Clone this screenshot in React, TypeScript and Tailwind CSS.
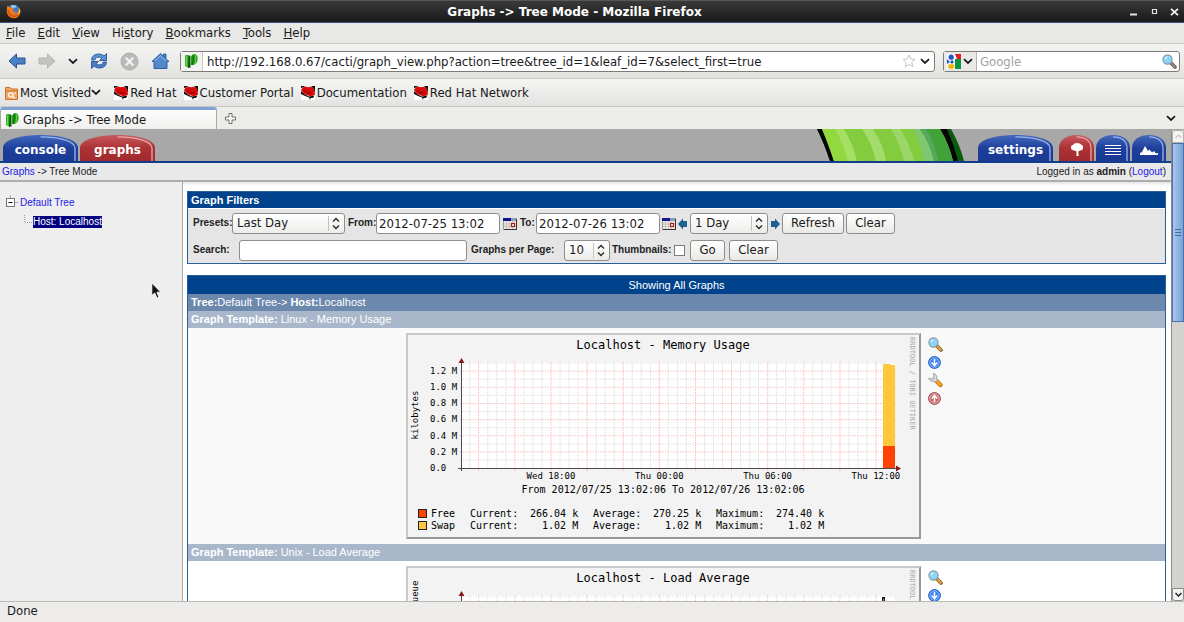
import { useState } from "react";
import type { ReactNode } from "react";

interface LegendRow {
  color: string;
  name: string;
  values: string[];
}

interface Graph {
  id: string;
  template: string;
  title: string;
  axisLabel: string;
  axisLabelY: number;
  ticks: string[];
  timeLabels: string[];
  range: string;
  legend: LegendRow[];
}

const GRAPHS: Graph[] = [
  {
    id: "memory",
    template: "Linux - Memory Usage",
    title: "Localhost - Memory Usage",
    axisLabel: "kilobytes",
    axisLabelY: 82,
    ticks: ["0.0  ", "0.2 M", "0.4 M", "0.6 M", "0.8 M", "1.0 M", "1.2 M"],
    timeLabels: ["Wed 18:00", "Thu 00:00", "Thu 06:00", "Thu 12:00"],
    range: "From 2012/07/25 13:02:06 To 2012/07/26 13:02:06",
    legend: [
      { color: "#ff4105", name: "Free", values: ["266.04 k", "270.25 k", "274.40 k"] },
      { color: "#ffc73b", name: "Swap", values: ["  1.02 M", "  1.02 M", "  1.02 M"] },
    ],
  },
  {
    id: "load",
    template: "Unix - Load Average",
    title: "Localhost - Load Average",
    axisLabel: "processes in the run queue",
    axisLabelY: 85,
    ticks: [],
    timeLabels: [],
    range: "",
    legend: [],
  },
];

const MENUS = ["File", "Edit", "View", "History", "Bookmarks", "Tools", "Help"];
const MENU_KEYS = [0, 0, 0, 2, 0, 0, 0];
const BOOKMARKS = ["Red Hat", "Customer Portal", "Documentation", "Red Hat Network"];
const MONO = "'DejaVu Sans Mono', monospace";

function Chevron() {
  return (
    <svg width="10" height="7" viewBox="0 0 10 7" fill="none" stroke="#1c1c1c" strokeWidth="1.8" aria-hidden="true">
      <path d="M1 1.2 L5 5 L9 1.2" />
    </svg>
  );
}

function CactiIcon() {
  return (
    <svg width="13" height="14" viewBox="0 0 13 14" aria-hidden="true">
      <path d="M0 2 Q0 1 1 1 L3 1 L4 3 L4 14 L0 12Z" fill="#36b324" />
      <path d="M3.5 1 L5.5 2 L5.5 13.5 L3 14Z" fill="#0c5a0b" />
      <path d="M6 3 Q7 0 10 0 Q13 1 12.5 6 Q12 10 8.5 11 L6 11Z" fill="#23a216" />
      <path d="M8 1 Q9 5 7 11" stroke="#0d6e0c" strokeWidth="1.3" fill="none" />
      <path d="M1.5 2 V12 M10.5 1 Q11 6 10 10" stroke="#7ee25c" strokeWidth=".8" fill="none" />
    </svg>
  );
}

function FirefoxIcon() {
  return (
    <svg width="15" height="15" viewBox="0 0 15 15" aria-hidden="true">
      <circle cx="7.8" cy="6.8" r="6" fill="#3a79c4" />
      <path d="M4 2 Q7 0 11 2 Q9 5 6 4Z" fill="#8cc4ee" />
      <path d="M1.5 1.5 L4 3.6 Q6 3 6.5 4.2 L8.4 5 Q6.8 6 6.6 7 Q8.5 8.8 11 7.3 Q10.5 9.8 7.6 9.9 Q11 11 12.6 7 Q12.8 4.5 11.8 3 Q14.5 4.5 14.4 8.2 Q13.2 14.2 7.5 14.2 Q1.2 13.6 .8 7.5 Q.6 4 1.5 1.5Z" fill="#f07a1a" />
      <path d="M1.6 6 Q2 12 8 13.2 Q12.5 12.8 13.8 8.5 Q11.5 12 7.5 11.6 Q3 10.5 3 6Z" fill="#d9480c" />
      <path d="M13.6 5 Q14.3 8 12.6 10" stroke="#ffd34d" fill="none" />
    </svg>
  );
}

function RedHatIcon() {
  return (
    <svg width="14" height="14" viewBox="0 0 14 14" aria-hidden="true">
      <rect width="14" height="14" fill="#fff" />
      <path d="M0 0 H4 L2 1.5 L0 2Z M10 0 H14 V7 L12.5 3Z" fill="#111" />
      <path d="M0 5 L4 8.5 L8 10.5 L13.5 9.5 L12 12 L9.5 12 L9 14 L8 11.5 L4 10 L0 8Z" fill="#111" />
      <path d="M0 4 Q1 1 4 .5 L7 1.2 Q9 0 12 2 Q14 5 14 8.6 Q11 11 7 9.6 Q3 8.6 0 4Z" fill="#d80a0a" />
      <path d="M3 4.5 Q6 7.5 11 7.2" stroke="#8b0000" fill="none" />
    </svg>
  );
}

function MagnifierIcon({ handle }: { handle: string }) {
  return (
    <svg width="15" height="15" viewBox="0 0 15 15" aria-hidden="true">
      <path d="M8.5 8.5 L13 13" stroke="#6d5a3c" strokeWidth="3.6" strokeLinecap="round" />
      <path d="M9.3 9.3 L12.8 12.8" stroke={handle} strokeWidth="2.2" strokeLinecap="round" />
      <circle cx="5.5" cy="5.5" r="4.6" fill="#8fd3f2" stroke="#7f97a8" strokeWidth="1.1" />
      <path d="M2.5 5.5 Q3 2.5 6 2.4 Q5 4.5 2.5 5.5Z" fill="#eafaff" />
    </svg>
  );
}

function ArrowDisc({ up }: { up?: boolean }) {
  return (
    <svg width="13" height="13" viewBox="0 0 13 13" aria-hidden="true">
      <circle cx="6.5" cy="6.5" r="5.9" fill={up ? "#c9666a" : "#3d83ee"} stroke={up ? "#9c4a4f" : "#2455bd"} />
      <circle cx="6.5" cy="6.5" r="4.7" fill="none" stroke={up ? "#f0c8c8" : "#9cc6ff"} strokeWidth=".8" />
      <path
        d={up ? "M6.5 10 V3.6 M3.7 6.4 L6.5 3.4 L9.3 6.4" : "M6.5 3 V9.4 M3.7 6.6 L6.5 9.6 L9.3 6.6"}
        stroke="#fff"
        strokeWidth="1.5"
        fill="none"
      />
    </svg>
  );
}

function WrenchIcon() {
  return (
    <svg width="15" height="15" viewBox="0 0 15 15" aria-hidden="true">
      <path d="M8 7.5 L12.5 12" stroke="#b86a0a" strokeWidth="4.2" strokeLinecap="round" />
      <path d="M8.5 8 L12.3 11.8" stroke="#f9a31c" strokeWidth="2.8" strokeLinecap="round" />
      <path d="M5.4 .6 Q9.5 1.5 8.6 5.8 L9.6 7 L7.2 9.3 L5.8 8.2 Q2 9 .7 5.2 L3.2 6 L5.4 5.6 L5.8 3.2Z" fill="#d7dade" stroke="#8d9298" strokeWidth=".8" />
    </svg>
  );
}

function CalendarIcon() {
  return (
    <svg width="14" height="12" viewBox="0 0 14 12" className="shrink-0" aria-hidden="true">
      <rect x=".5" y=".5" width="13" height="11" fill="#e9e9e4" stroke="#9b9b96" />
      <rect width="8" height="3" fill="#14148c" />
      <rect x="8" width="5" height="3" fill="#8f9bbf" />
      <path d="M1 6 H13 M1 8.5 H13 M3.5 3 V11 M6.5 3 V11 M9.5 3 V11" stroke="#bcbcb8" strokeWidth=".8" />
      <rect x="8.5" y="5.5" width="3" height="3" fill="#fff" stroke="#b3161b" strokeWidth="1.2" />
      <path d="M13.5 1 V11.5 H1" stroke="#3a3030" fill="none" />
    </svg>
  );
}

function ShiftArrow({ left }: { left?: boolean }) {
  return (
    <svg width="10" height="12" viewBox="0 0 10 12" className="block" aria-hidden="true">
      <path d={left ? "M0 6 L5 .5 V3 H9 V9 H5 V11.5Z" : "M10 6 L5 .5 V3 H1 V9 H5 V11.5Z"} fill="#1d6094" />
    </svg>
  );
}

function NavArrow({ forward }: { forward?: boolean }) {
  return (
    <svg width="18" height="18" viewBox="0 0 18 18" aria-hidden="true">
      <path
        d={forward ? "M17 9 L9.5 2 V6 H1 V12 H9.5 V16Z" : "M1 9 L8.5 2 V6 H17 V12 H8.5 V16Z"}
        fill={forward ? "#c3c3c1" : "#4a7fc3"}
        stroke={forward ? "#b4b4b2" : "#24569b"}
        strokeLinejoin="round"
      />
    </svg>
  );
}

function TitleBar() {
  return (
    <header className="flex h-[23px] shrink-0 items-center border-t border-b border-t-[#585858] border-b-[#3b5580] bg-linear-to-b from-[#3a3a3a] to-[#191919] pl-1.5">
      <FirefoxIcon />
      <h1 className="flex-1 text-center font-['DejaVu_Sans',sans-serif] text-[12px] leading-4 font-bold text-white">
        Graphs -&gt; Tree Mode - Mozilla Firefox
      </h1>
      <div className="flex items-center gap-2 pr-1">
        <button type="button" aria-label="Minimize" className="flex h-4 w-3 items-center justify-center">
          <svg width="8" height="9" stroke="#e4e4e4" strokeWidth="2" aria-hidden="true"><path d="M0 7.5 H7" /></svg>
        </button>
        <button type="button" aria-label="Maximize" className="flex h-4 w-3 items-center justify-center">
          <svg width="7" height="7" fill="none" stroke="#e4e4e4" aria-hidden="true"><path d="M1.5 1 V5.5 H5.5 V1 M1 1.5 H6" strokeWidth="1.2" /></svg>
        </button>
        <button type="button" aria-label="Close" className="flex h-4 w-3 items-center justify-center">
          <svg width="9" height="8" stroke="#f0f0f0" strokeWidth="1.8" aria-hidden="true"><path d="M1 .8 L8 7.2 M8 .8 L1 7.2" /></svg>
        </button>
      </div>
    </header>
  );
}

function MenuBar() {
  return (
    <nav className="flex h-[21px] shrink-0 items-center gap-3 border-b border-[#c4c4c1] bg-[#e8e8e6] pl-1.5">
      {MENUS.map((name, i) => (
        <button key={name} type="button">
          {name.slice(0, MENU_KEYS[i])}
          <span className="underline">{name[MENU_KEYS[i]]}</span>
          {name.slice(MENU_KEYS[i] + 1)}
        </button>
      ))}
    </nav>
  );
}

function NavToolbar() {
  return (
    <div className="flex h-[35px] shrink-0 items-center border-b border-[#cbcbc8] bg-linear-to-b from-[#f4f4f3] to-[#e2e2e0] pr-1 pl-2">
      <button type="button" aria-label="Back"><NavArrow /></button>
      <button type="button" aria-label="Forward" className="ml-3"><NavArrow forward /></button>
      <button type="button" aria-label="History" className="ml-3"><Chevron /></button>
      <button type="button" aria-label="Reload" className="ml-3">
        <svg width="18" height="18" viewBox="0 0 18 18" aria-hidden="true">
          <path d="M1.5 8 Q2 2 9 2 Q12 2 14 4 L16.5 1.5 V8.5 H9.5 L12 6.2 Q9 4.2 6.5 5.5 Q5 6.5 4.8 8Z" fill="#5c91d2" stroke="#24569b" strokeWidth=".9" />
          <path d="M16.5 10 Q16 16 9 16 Q6 16 4 14 L1.5 16.5 V9.5 H8.5 L6 11.8 Q9 13.8 11.5 12.5 Q13 11.5 13.2 10Z" fill="#4a7fc3" stroke="#24569b" strokeWidth=".9" />
        </svg>
      </button>
      <button type="button" aria-label="Stop" className="ml-3">
        <svg width="19" height="19" viewBox="0 0 19 19" aria-hidden="true">
          <circle cx="9.5" cy="9.5" r="8.5" fill="#bdb9b8" stroke="#aeaaa9" />
          <path d="M6.3 6.3 L12.7 12.7 M12.7 6.3 L6.3 12.7" stroke="#f5f5f5" strokeWidth="2.2" strokeLinecap="round" />
        </svg>
      </button>
      <button type="button" aria-label="Home" className="ml-3">
        <svg width="19" height="18" viewBox="0 0 19 18" aria-hidden="true">
          <path d="M12.5 2 H15 V6 H12.5Z" fill="#4a7fc3" stroke="#24569b" strokeWidth=".8" />
          <path d="M1 9.5 L9.5 1.5 L18 9.5 H16 V16.5 H3 V9.5Z" fill="#5389cb" stroke="#24569b" strokeWidth=".9" strokeLinejoin="round" />
          <path d="M4 9 L9.5 3.6 L15 9" stroke="#92b8e6" fill="none" />
        </svg>
      </button>
      <div className="ml-2.5 flex h-[21px] min-w-0 flex-1 items-center rounded-[3px] border border-[#7c7b76] bg-white pr-1">
        <span className="flex h-full w-[22px] shrink-0 items-center justify-center border-r border-[#c9c9c6] bg-[#f3f3f2]">
          <CactiIcon />
        </span>
        <input
          aria-label="Location"
          defaultValue="http://192.168.0.67/cacti/graph_view.php?action=tree&tree_id=1&leaf_id=7&select_first=true"
          className="h-full min-w-0 flex-1 bg-transparent pl-1 outline-none"
        />
        <svg width="14" height="14" viewBox="0 0 14 14" fill="#fff" stroke="#c6c6c4" strokeLinejoin="round" aria-hidden="true">
          <path d="M7 1 L8.7 5 L13 5.3 L9.8 8.2 L10.8 12.8 L7 10.4 L3.2 12.8 L4.2 8.2 L1 5.3 L5.3 5Z" />
        </svg>
        <button type="button" aria-label="Show history" className="ml-1"><Chevron /></button>
      </div>
      <div className="ml-2 flex h-[21px] w-[237px] items-center rounded-[3px] border border-[#7c7b76] bg-white pr-0.5">
        <button type="button" aria-label="Search engine" className="flex h-full shrink-0 items-center gap-0.5 border-r border-[#b4b4b0] bg-[#e9e9e7] px-[3px]">
          <svg width="14" height="15" viewBox="0 0 14 15" aria-hidden="true">
            <rect width="14" height="15" fill="#fff" />
            <path d="M8 0 H14 V5 H10Z" fill="#de1f26" />
            <path d="M8 5 H14 V15 H8Z" fill="#0c9440" />
            <circle cx="4.2" cy="3.2" r="2.6" fill="#1f55c4" />
            <path d="M0 5 L3 8 L0 10Z" fill="#1f55c4" />
            <path d="M5 6 L7 8 L5 10 L3 8Z" fill="#1f55c4" />
            <ellipse cx="4.2" cy="12.4" rx="3.2" ry="2.3" fill="#f4b40e" />
          </svg>
          <Chevron />
        </button>
        <input aria-label="Search" placeholder="Google" className="h-full min-w-0 flex-1 pl-[3px] outline-none placeholder:text-[#a3a3a1]" />
        <button type="button" aria-label="Search the web"><MagnifierIcon handle="#8b8b8b" /></button>
      </div>
    </div>
  );
}

function BookmarksBar() {
  return (
    <div className="flex h-7 shrink-0 items-center gap-[7px] border-b border-[#c6c6c3] bg-linear-to-b from-[#f5f5f3] to-[#e3e3e1] pl-[5px]">
      <button type="button" className="mr-1.5 flex items-center">
        <svg width="13" height="14" viewBox="0 0 13 14" className="mr-0.5" aria-hidden="true">
          <path d="M.5 1.5 H5 L6.5 3 H12.5 V13.5 H.5Z" fill="#f3a765" stroke="#c8722a" />
          <path d="M1 5 H12" stroke="#c8722a" />
          <circle cx="5.8" cy="8.8" r="2.2" fill="none" stroke="#fff" strokeWidth="1.2" />
          <path d="M7.5 10.5 L9.8 12.5 M9 7 H11" stroke="#fff" strokeWidth="1.2" />
        </svg>
        Most Visited
        <Chevron />
      </button>
      {BOOKMARKS.map((name) => (
        <a key={name} href="#" className="flex items-center gap-0.5">
          <RedHatIcon />
          {name}
        </a>
      ))}
    </div>
  );
}

function TabStrip() {
  return (
    <div className="flex h-[23px] shrink-0 items-end border-b border-[#a8a8a5] bg-[#ececea] pr-2">
      <button type="button" className="flex h-[22px] w-[217px] items-center gap-1 rounded-t-[3px] border border-t-[3px] border-b-0 border-[#a9a9a6] border-t-[#7fa2d6] bg-linear-to-b from-[#fdfdfd] to-[#efefed] pl-[5px]">
        <CactiIcon />
        Graphs -&gt; Tree Mode
      </button>
      <button type="button" aria-label="Open a new tab" className="ml-2 flex h-[22px] items-center">
        <svg width="11" height="11" viewBox="0 0 11 11" fill="#fff" stroke="#6e6e6b" aria-hidden="true">
          <path d="M4 .5 H7 V4 H10.5 V7 H7 V10.5 H4 V7 H.5 V4 H4Z" />
        </svg>
      </button>
      <button type="button" aria-label="List all tabs" className="ml-auto flex h-[22px] items-center"><Chevron /></button>
    </div>
  );
}

function ShellTab({ label, red, width, children }: { label?: string; red?: boolean; width: number; children?: ReactNode }) {
  const w = width;
  return (
    <a
      href="#"
      aria-label={label ?? "view"}
      className="relative flex h-[26px] items-center justify-center font-['DejaVu_Sans',sans-serif] text-[12px] leading-4 font-bold text-white"
      style={{ width: w }}
    >
      <svg width={w} height="26" viewBox={`0 0 ${w} 26`} className="absolute inset-0" aria-hidden="true">
        <defs>
          <linearGradient id={`tab${w}${red}`} x1="0" y1="0" x2="0" y2="1">
            <stop offset="0" stopColor={red ? "#c65a5e" : "#4468bd"} />
            <stop offset=".5" stopColor={red ? "#ad3236" : "#1e409b"} />
            <stop offset="1" stopColor={red ? "#a12a2e" : "#183a93"} />
          </linearGradient>
        </defs>
        <path
          d={`M0 26 V13 C0 4 ${w * 0.25} 0 ${w / 2} 0 C${w * 0.75} 0 ${w} 4 ${w} 13 V26Z`}
          fill={`url(#tab${w}${red})`}
        />
        <path
          d={`M${w / 2} 1.8 C${w * 0.75} 1.8 ${w - 3} 6 ${w - 3} 13 V26`}
          fill="none"
          stroke={red ? "#e7a9ab" : "#9db4e8"}
          strokeWidth="1.3"
        />
      </svg>
      <span className="relative pt-1">{label}{children}</span>
    </a>
  );
}

function CactiHeader() {
  return (
    <div className="flex h-[33px] shrink-0 items-end border-b-2 border-[#123c8c] bg-[#a8a8a8] pr-[5px] pl-[3px]">
      <div className="flex gap-0.5">
        <ShellTab label="console" width={75} />
        <ShellTab label="graphs" red width={75} />
      </div>
      <svg width="150" height="32" viewBox="0 0 150 32" className="ml-auto" aria-hidden="true">
        <path d="M1 0 H135 Q144 16 148 32 H14 Q8 14 1 0Z" fill="#0b5a0e" />
        <path d="M1 0 H131 Q138 16 142 32 H14 Q8 14 1 0Z" fill="#050505" />
        <path d="M6 0 H124 Q133 15 137 32 H18 Q12 14 6 0Z" fill="#83cc3e" />
        <path d="M6 0 H22 Q30 16 34 32 H18 Q12 14 6 0Z" fill="#92d83f" />
        <path d="M19 0 H28 Q37 15 41 32 H32 Q27 14 19 0Z" fill="#a5df63" />
        <path d="M46 0 H57 Q67 15 70 32 H60 Q56 14 46 0Z" fill="#a3dc6b" />
        <path d="M75 0 H84 Q94 15 98 32 H88 Q84 14 75 0Z" fill="#9bd768" />
        <path d="M97 0 H104 Q115 15 118 32 H108 Q105 14 97 0Z" fill="#7fc772" />
        <path d="M104 0 H124 Q133 15 137 32 H118 Q114 14 104 0Z" fill="#42a23a" />
        <path d="M104 0 H110 Q119 15 122 32 H118 Q114 14 104 0Z" fill="#55a95d" />
      </svg>
      <div className="ml-3 flex gap-0.5">
        <div className="mr-1"><ShellTab label="settings" width={75} /></div>
        <ShellTab red width={35}>
          <svg width="14" height="14" viewBox="0 0 14 14" className="block" fill="#fff" aria-hidden="true">
            <path d="M1 4 Q1 2 3 2 Q4 0 7 0 Q10 0 11 1.5 Q13.5 2 13 5 Q13 7.5 10 7.5 L8.3 8.5 L8.6 13 H6.4 L6.6 8.5 L4.5 7.6 Q.5 7 1 4Z" />
          </svg>
        </ShellTab>
        <ShellTab width={34}>
          <svg width="16" height="12" viewBox="0 0 16 12" className="block" stroke="#fff" strokeWidth="1.1" aria-hidden="true">
            <path d="M0 1.5 H16 M0 4.5 H16 M0 7.5 H16 M0 10.5 H16" />
          </svg>
        </ShellTab>
        <ShellTab width={34}>
          <svg width="18" height="9" viewBox="0 0 18 9" className="block" fill="#fff" aria-hidden="true">
            <path d="M0 9 V7 L2 6 L5 0 L8 5 L9.5 3.5 L12 6.5 L14 5 L16 7.5 L18 7 V9Z" />
          </svg>
        </ShellTab>
      </div>
    </div>
  );
}

function SideTree() {
  return (
    <aside className="w-[183px] shrink-0 border-r border-[#a6a6a6] bg-[#eeeeee] pt-[13px] pl-1.5 text-[10px] leading-3">
      <div className="flex items-center gap-0.5">
        <svg width="12" height="14" viewBox="0 0 12 14" className="mb-0.5" fill="none" stroke="#777" aria-hidden="true">
          <rect x=".5" y="3.5" width="8" height="8" fill="#fff" />
          <path d="M2.5 7.5 H6.5" stroke="#000" />
          <path d="M4.5 0 V3 M9 7.5 H12" stroke="#aaa" />
        </svg>
        <a href="#" className="text-[#2320e6]">Default Tree</a>
      </div>
      <div className="mt-1 flex items-center pl-[18px]">
        <svg width="9" height="10" className="mb-1" fill="none" stroke="#999" strokeDasharray="1 1" aria-hidden="true"><path d="M.5 0 V7.5 H9" /></svg>
        <a href="#" className="bg-[#000080] text-white">Host: Localhost</a>
      </div>
    </aside>
  );
}

const controlClass =
  "h-[21px] rounded-[3px] border border-[#8f8e8a] font-['DejaVu_Sans_Condensed','DejaVu_Sans',sans-serif] text-[13px] font-normal text-[#1a1a1a]";

function FilterSelect({ id, options, className }: { id: string; options: string[]; className: string }) {
  return (
    <span className={`relative inline-flex ${className}`}>
      <select id={id} aria-label={id} className={`${controlClass} w-full appearance-none bg-linear-to-b from-white to-[#ececea] pl-1`}>
        {options.map((option) => (
          <option key={option}>{option}</option>
        ))}
      </select>
      <svg width="16" height="15" viewBox="0 0 16 15" className="pointer-events-none absolute top-[3px] right-[1px]" fill="none" aria-hidden="true">
        <path d="M.5 0 V15" stroke="#c2c2bf" />
        <path d="M5 5.5 L8 2.5 L11 5.5 M5 9.5 L8 12.5 L11 9.5" stroke="#2a2a2a" strokeWidth="1.4" />
      </svg>
    </span>
  );
}

function FilterButton({ children, className }: { children: ReactNode; className: string }) {
  return (
    <button type="button" className={`${controlClass} ${className} bg-linear-to-b from-white to-[#e9e9e7]`}>
      {children}
    </button>
  );
}

function GraphFilters() {
  const [from, setFrom] = useState("2012-07-25 13:02");
  const [to, setTo] = useState("2012-07-26 13:02");
  const [search, setSearch] = useState("");
  const [thumbnails, setThumbnails] = useState(false);

  return (
    <form className="border border-[#2a5f9e] bg-[#e5e5e5] text-[10px] leading-4 font-bold">
      <h2 className="h-[17px] border-b border-white bg-[#00438c] pl-[3px] text-[11px] text-white">Graph Filters</h2>
      <div className="flex h-7 items-center pl-[5px]">
        <label htmlFor="presets" className="w-[39px]">Presets:</label>
        <FilterSelect id="presets" options={["Last Day", "Last Week", "Last Month"]} className="w-[113px]" />
        <label htmlFor="from" className="ml-[3px] w-7">From:</label>
        <input id="from" value={from} onChange={(e) => setFrom(e.target.value)} className={`${controlClass} w-[124px] bg-white pl-0.5`} />
        <button type="button" aria-label="Pick start date" className="mx-[3px] mt-0.5"><CalendarIcon /></button>
        <label htmlFor="to" className="w-4">To:</label>
        <input id="to" value={to} onChange={(e) => setTo(e.target.value)} className={`${controlClass} w-[124px] bg-white pl-0.5`} />
        <button type="button" aria-label="Pick end date" className="mx-0.5 mt-0.5"><CalendarIcon /></button>
        <button type="button" aria-label="Shift left" className="mt-0.5"><ShiftArrow left /></button>
        <FilterSelect id="timespan" options={["1 Day", "1 Week"]} className="ml-0.5 w-[78px]" />
        <button type="button" aria-label="Shift right" className="mx-0.5 mt-0.5"><ShiftArrow /></button>
        <FilterButton className="w-[62px]">Refresh</FilterButton>
        <FilterButton className="ml-0.5 w-[49px]">Clear</FilterButton>
      </div>
      <div className="flex h-[26px] items-center pl-[5px]">
        <label htmlFor="search" className="w-[46px]">Search:</label>
        <input id="search" value={search} onChange={(e) => setSearch(e.target.value)} className={`${controlClass} w-[228px] bg-white pl-0.5`} />
        <label htmlFor="perpage" className="ml-1 w-[93px]">Graphs per Page:</label>
        <FilterSelect id="perpage" options={["10", "20", "50"]} className="w-[46px]" />
        <label htmlFor="thumbnails" className="ml-0.5 w-[62px]">Thumbnails:</label>
        <input
          id="thumbnails"
          type="checkbox"
          checked={thumbnails}
          onChange={(e) => setThumbnails(e.target.checked)}
          className="h-[11px] w-[11px] appearance-none border border-[#7c7b76] bg-white checked:bg-[#00438c]"
        />
        <FilterButton className="ml-[5px] w-[35px]">Go</FilterButton>
        <FilterButton className="ml-1 w-[49px]">Clear</FilterButton>
      </div>
    </form>
  );
}

function RrdGraph({ graph }: { graph: Graph }) {
  const isMemory = graph.id === "memory";
  const rows = Array.from({ length: 13 }, (_, i) => 127 - i * 8.08);
  const columns = Array.from({ length: 47 }, (_, i) => 63.7 + i * 9.03);
  const plotTop = 29;
  const plotBottom = 135;

  return (
    <svg width="515" height="206" viewBox="0 0 515 206" className="block shrink-0" fontFamily={MONO} fontSize="9" role="img" aria-label={graph.title}>
      <rect width="515" height="206" fill="#f3f3f3" />
      <path d="M0 206 V0 H515 V2 H2 V206Z" fill="#c9c9c9" />
      <path d="M515 0 V206 H0 L2 204 H513 V2Z" fill="#999" />
      <rect x="56" y={plotTop} width="433" height="106" fill="#fff" />
      <text x="257" y="16" fontSize="12" textAnchor="middle">{graph.title}</text>
      <g strokeDasharray="1.5 1" strokeWidth="1">
        {rows.map((y, i) => (
          <path key={y} d={`M54 ${y} H491`} stroke={isMemory && i % 2 === 1 ? "#f7c4c4" : "#e2e2e2"} />
        ))}
        {columns.map((x, i) => (
          <path key={x} d={`M${x} ${plotTop} V${i % 4 === 1 ? plotBottom + 3 : plotBottom + 1}`} stroke={i % 4 === 1 ? "#f7baba" : "#dedede"} />
        ))}
      </g>
      {isMemory ? (
        <>
          <path d="M477 135 V31 H484 L485 32 H489 V135Z" fill="#ffc73b" />
          <rect x="477" y="113" width="12" height="22" fill="#ff4105" />
        </>
      ) : (
        <>
          <rect x="476" y="31" width="3" height="104" fill="#1b1b1b" />
          <rect x="477" y="33" width="1" height="102" fill="#e77a00" />
        </>
      )}
      <path d="M55.5 138 V28 M52 135.5 H491" stroke="#54454a" fill="none" />
      <path d="M52.5 30 L55.5 25 L58.5 30Z M490 132.5 L495 135.5 L490 138.5Z" fill="#8a1b1b" />
      {graph.ticks.map((tick, i) => (
        <text key={tick} x="24" y={138 - i * 16.2} className="whitespace-pre">{tick}</text>
      ))}
      {graph.timeLabels.map((label, i) => (
        <text key={label} x={145 + i * 108.3} y="146" textAnchor="middle">{label}</text>
      ))}
      {graph.range && <text x="257" y="160" fontSize="10" textAnchor="middle">{graph.range}</text>}
      <text transform={`translate(12 ${graph.axisLabelY}) rotate(-90)`} textAnchor="middle">{graph.axisLabel}</text>
      <text transform="translate(504 4) rotate(90)" fontSize="7" fill="#a9a9a9">RRDTOOL / TOBI OETIKER</text>
      {graph.legend.map((row, i) => (
        <g key={row.name} fontSize="10" transform={`translate(0 ${i * 12})`}>
          <rect x="12.5" y="176.5" width="8" height="8" fill={row.color} stroke="#222" />
          <text x="25" y="184">{row.name}</text>
          {["Current:", "Average:", "Maximum:"].map((stat, j) => (
            <g key={stat}>
              <text x={64 + j * 123} y="184">{stat}</text>
              <text x={124 + j * 123} y="184" className="whitespace-pre">{row.values[j]}</text>
            </g>
          ))}
        </g>
      ))}
    </svg>
  );
}

function GraphList() {
  return (
    <section className="mt-[11px] border border-[#2a5f9e] text-[11px] leading-4 text-white">
      <h2 className="h-[18px] bg-[#00438c] text-center leading-[18px]">Showing All Graphs</h2>
      <div className="h-[17px] bg-[#6d88ad] pl-[3px]">
        <b>Tree:</b>Default Tree-&gt; <b>Host:</b>Localhost
      </div>
      {GRAPHS.map((graph) => (
        <div key={graph.id}>
          <h3 className="h-[17px] bg-[#a9b7cb] pl-[3px]">
            <b>Graph Template:</b> {graph.template}
          </h3>
          <div className={`flex justify-center gap-[7px] py-[5px] text-black ${graph.id === "memory" ? "bg-[#f9f9f9]" : "bg-white"}`}>
            <RrdGraph graph={graph} />
            <div className="flex flex-col gap-1 pt-1 pr-1">
              <a href="#" aria-label="Zoom Graph"><MagnifierIcon handle="#f0a028" /></a>
              <a href="#" aria-label="CSV Export"><ArrowDisc /></a>
              <a href="#" aria-label="Graph Source"><WrenchIcon /></a>
              <a href="#" aria-label="Page Top"><ArrowDisc up /></a>
            </div>
          </div>
        </div>
      ))}
    </section>
  );
}

function Scrollbar() {
  return (
    <div className="flex w-[13px] shrink-0 flex-col border-l border-[#8b8b88] bg-[#d3d2cf]">
      <button type="button" aria-label="Scroll up" className="flex h-[13px] items-center justify-center rounded-t-[3px] border border-[#b0b0ad] bg-[#f3f3f2]">
        <svg width="7" height="5" fill="none" stroke="#aaa" aria-hidden="true"><path d="M.5 4 L3.5 1 L6.5 4" /></svg>
      </button>
      <div className="flex h-[38%] items-center justify-center border border-[#4a71a8] bg-linear-to-r from-[#a8c6ee] to-[#7ba3d8]">
        <svg width="6" height="8" stroke="#416ca8" aria-hidden="true"><path d="M0 1.5 H6 M0 4.5 H6 M0 7.5 H6" /></svg>
      </div>
      <button type="button" aria-label="Scroll down" className="mt-auto flex h-[13px] items-center justify-center rounded-b-[3px] border border-[#8b8b88] bg-[#f3f3f2]">
        <svg width="7" height="5" fill="none" stroke="#222" strokeWidth="1.5" aria-hidden="true"><path d="M.5 1 L3.5 4 L6.5 1" /></svg>
      </button>
    </div>
  );
}

function CactiPage() {
  return (
    <div className="flex min-w-0 flex-1 flex-col bg-white font-['Liberation_Sans',sans-serif] text-[#222]">
      <CactiHeader />
      <div className="flex h-[19px] shrink-0 items-center justify-between border-b-2 border-[#adadad] bg-[#e9e9e9] pr-[5px] pl-0.5 text-[10px]">
        <span><a href="#" className="text-[#2320e6]">Graphs</a> -&gt; Tree Mode</span>
        <span>Logged in as <b>admin</b> (<a href="#" className="text-[#2320e6]">Logout</a>)</span>
      </div>
      <div className="flex min-h-0 flex-1">
        <SideTree />
        <main className="min-w-0 flex-1 overflow-hidden bg-linear-to-b from-[#e4e4e4] to-white to-[4px] pt-[9px] pr-[5px] pl-1">
          <GraphFilters />
          <GraphList />
        </main>
      </div>
    </div>
  );
}

export default function App() {
  return (
    <div className="relative flex h-screen flex-col overflow-hidden bg-[#edecea] font-['DejaVu_Sans_Condensed','DejaVu_Sans',sans-serif] text-[13px] leading-4 text-[#1a1a1a]">
      <TitleBar />
      <MenuBar />
      <NavToolbar />
      <BookmarksBar />
      <TabStrip />
      <div className="flex min-h-0 flex-1">
        <CactiPage />
        <Scrollbar />
      </div>
      <footer className="h-[21px] shrink-0 border-t border-[#b9b9b6] pt-px pl-[7px]">Done</footer>
      <svg width="11" height="18" viewBox="0 0 11 18" className="pointer-events-none absolute top-[282px] left-[151px]" aria-hidden="true">
        <path d="M.8 1 V13.5 L3.8 11 L6 16.2 L8 15.3 L5.9 10.2 H9.8Z" fill="#111" stroke="#fff" strokeWidth=".9" />
      </svg>
    </div>
  );
}
